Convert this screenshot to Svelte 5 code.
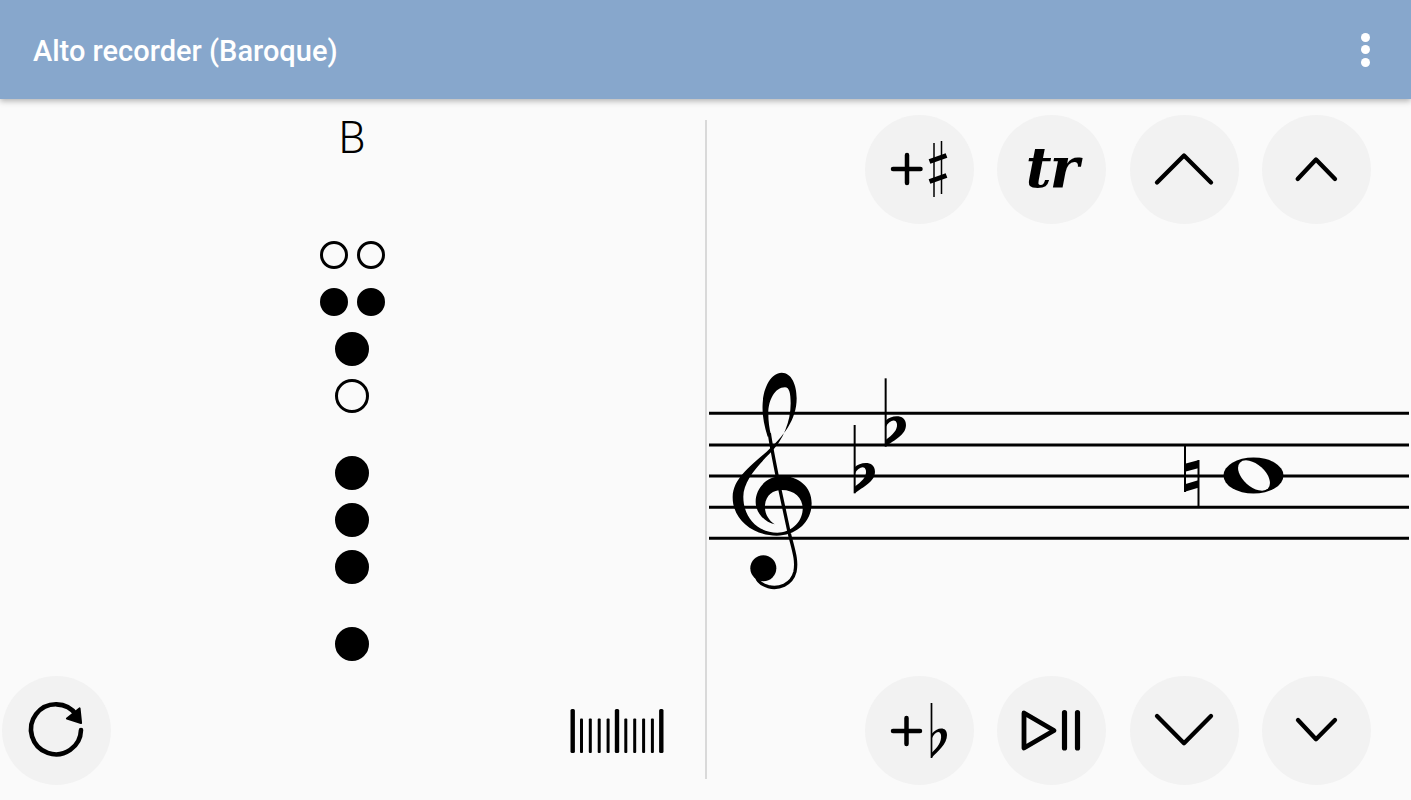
<script>
  // fingering chart for the current note, top to bottom
  const holes = [
    { cells: [false, false], small: true },
    { cells: [true, true], small: true },
    { cells: [true] },
    { cells: [false] },
    { cells: [true], gap: true },
    { cells: [true] },
    { cells: [true] },
    { cells: [true], gap: true }
  ];

  const staffLines = [413.3, 445, 476, 507.3, 538.3];
  const tallBars = [572.7, 617, 661.3];
  const shortBars = [581.5, 590.3, 599.2, 608.1, 625.8, 634.7, 643.6, 652.4];
</script>

<div class="screen">
  <header class="appbar">
    <span class="title">Alto recorder (Baroque)</span>
    <div class="menu"><i></i><i></i><i></i></div>
  </header>

  <main class="content">
    <section class="left">
      <div class="note">B</div>
      <div class="holes">
        {#each holes as row}
          <div class="hole-row" class:gap={row.gap}>
            {#each row.cells as closed}
              <span class="hole" class:small={row.small} class:closed></span>
            {/each}
          </div>
        {/each}
      </div>
      <div class="left-bottom">
        <div class="btn">
          <svg viewBox="0 0 109 109" class="icon">
            <path d="M74.500 39 A25 25 0 1 0 79 54" fill="none" stroke="#000" stroke-width="4.600" stroke-linecap="round" />
            <path d="M77.500 32.500 L79 47 L65 42.500 Z" fill="#000" stroke="#000" stroke-width="2.200" stroke-linejoin="round" />
          </svg>
        </div>
        <svg class="bars" viewBox="570 705 95 50">
          {#each tallBars as x}
            <rect x={x - 2.200} y="708" width="4.400" height="44" rx="1.500" />
          {/each}
          {#each shortBars as x}
            <rect x={x - 1.500} y="717.500" width="3" height="34.500" rx="1" />
          {/each}
        </svg>
      </div>
    </section>

    <div class="divider"></div>

    <section class="right">
      <div class="btn-row">
        <div class="btn">
          <svg viewBox="0 0 109 109" class="icon">
            <path d="M28 54 H55.500 M42 40 V68" stroke="#000" stroke-width="4.500" stroke-linecap="round" />
            <path d="M69 28 V82 M76.500 26 V79" stroke="#000" stroke-width="1.500" />
            <path d="M64.500 46.500 L81.500 40.500 M64.500 66.500 L81.500 60.500" stroke="#000" stroke-width="5" />
          </svg>
        </div>
        <div class="btn"><span class="trill">tr</span></div>
        <div class="btn">
          <svg viewBox="0 0 109 109" class="icon">
            <path d="M27 67.500 L54 40.500 L81 67.500" fill="none" stroke="#000" stroke-width="4.300" stroke-linecap="round" stroke-linejoin="round" />
          </svg>
        </div>
        <div class="btn">
          <svg viewBox="0 0 109 109" class="icon">
            <path d="M35.700 64 L54 44.500 L73 64" fill="none" stroke="#000" stroke-width="4.300" stroke-linecap="round" stroke-linejoin="round" />
          </svg>
        </div>
      </div>

      <svg class="staff" viewBox="707 350 704 250">
        {#each staffLines as y}
          <line x1="709" x2="1409" y1={y} y2={y} stroke="#000" stroke-width="3" />
        {/each}

        <!-- clef and flats, traced at 3x from the staff origin -->
        <g transform="translate(700 350) scale(0.3333)">
          <path d="M245 68 C275 68 290 105 290 145 C290 210 250 260 200 305 C150 350 100 385 98 440 C97 510 160 557 230 557 C290 557 335 515 335 460 C335 410 295 378 245 378 C200 378 167 415 167 455 C167 490 195 517 224 523 C205 510 193 490 195 465 C198 435 220 420 245 420 C285 420 310 445 308 480 C305 520 270 548 232 548 C175 548 130 505 130 440 C130 395 170 350 210 310 C250 270 272 215 272 160 C272 130 268 112 255 112 C225 112 205 150 205 190 C205 215 208 235 213 255 L203 260 C192 225 186 195 188 160 C190 110 215 68 245 68 Z" />
          <path d="M208 250 C215 300 230 370 240 420 L268 550 C280 600 292 630 285 665 C275 705 235 718 205 710 C185 704 172 695 170 680" fill="none" stroke="#000" stroke-width="10" />
          <circle cx="190" cy="655" r="39" />

          <path d="M464 225 V430" stroke="#000" stroke-width="6" />
          <path d="M464 352 C480 335 525 330 525 365 C525 395 490 410 464 430 L464 410 C485 395 500 380 498 362 C495 345 475 350 464 372 Z" />
          <g transform="translate(93 -140)">
            <path d="M464 225 V430" stroke="#000" stroke-width="6" />
            <path d="M464 352 C480 335 525 330 525 365 C525 395 490 410 464 430 L464 410 C485 395 500 380 498 362 C495 345 475 350 464 372 Z" />
          </g>
        </g>

        <!-- natural sign -->
        <path d="M1185 445 V492 M1198.500 460 V507" stroke="#000" stroke-width="2" />
        <path d="M1184 464 L1199 460 V468 L1184 472 Z M1184 484.500 L1199 480 V487.500 L1184 492 Z" />

        <!-- whole note -->
        <ellipse cx="1253.500" cy="475.500" rx="30" ry="18" />
        <ellipse cx="1254" cy="475.500" rx="19" ry="11" transform="rotate(42 1254 475.500)" fill="#fafafa" />
      </svg>

      <div class="btn-row bottom">
        <div class="btn">
          <svg viewBox="0 0 109 109" class="icon">
            <path d="M28 55 H55 M41.500 42 V68" stroke="#000" stroke-width="4.500" stroke-linecap="round" />
            <path d="M66.500 27 V82" stroke="#000" stroke-width="1.700" />
            <path d="M66.500 58 C72 51 82 50 82 59 C82 68 73 75 66.500 82 L66.500 77 C72 72 77 66 76 59 C75 54 70 55 66.500 63 Z" />
          </svg>
        </div>
        <div class="btn">
          <svg viewBox="0 0 109 109" class="icon">
            <path d="M27 37 L57 54.500 L27 72 Z" fill="none" stroke="#000" stroke-width="4.800" stroke-linejoin="round" />
            <path d="M67.500 36.500 V72 M80.500 36.500 V72" stroke="#000" stroke-width="5.200" stroke-linecap="round" />
          </svg>
        </div>
        <div class="btn">
          <svg viewBox="0 0 109 109" class="icon">
            <path d="M27 40 L54 67.300 L81 40" fill="none" stroke="#000" stroke-width="4.300" stroke-linecap="round" stroke-linejoin="round" />
          </svg>
        </div>
        <div class="btn">
          <svg viewBox="0 0 109 109" class="icon">
            <path d="M36 44 L54 63.300 L73 44" fill="none" stroke="#000" stroke-width="4.300" stroke-linecap="round" stroke-linejoin="round" />
          </svg>
        </div>
      </div>
    </section>
  </main>
</div>

<style>
  :global(body) {
    margin: 0;
    background: #fafafa;
  }

  .screen {
    width: 1411px;
    height: 800px;
    overflow: hidden;
    background: #fafafa;
    font-family: Roboto, "Liberation Sans", sans-serif;
  }

  .appbar {
    position: relative;
    z-index: 1;
    height: 99px;
    box-sizing: border-box;
    padding: 0 33px;
    display: flex;
    align-items: center;
    justify-content: space-between;
    background: #87a7cc;
    box-shadow: 0 2px 6px rgba(0, 0, 0, 0.3);
  }

  .title {
    color: #fff;
    font-size: 29px;
    font-weight: 500;
    margin-top: 2px;
  }

  .menu {
    display: flex;
    flex-direction: column;
    gap: 3.500px;
    margin-right: 8px;
  }

  .menu i {
    display: block;
    width: 9px;
    height: 9px;
    border-radius: 50%;
    background: #fff;
  }

  .content {
    display: flex;
    height: 701px;
  }

  .left {
    width: 705px;
    flex: none;
    display: flex;
    flex-direction: column;
    align-items: center;
    box-sizing: border-box;
    padding: 15px 1px 15px 0;
  }

  .note {
    font-size: 44px;
    font-weight: 300;
    line-height: 48px;
  }

  .holes {
    margin-top: 69px;
  }

  .hole-row {
    height: 47px;
    display: flex;
    align-items: center;
    justify-content: center;
    gap: 9px;
  }

  .hole-row.gap {
    margin-top: 30px;
  }

  .hole {
    width: 34px;
    height: 34px;
    box-sizing: border-box;
    border: 3px solid #000;
    border-radius: 50%;
  }

  .hole.small {
    width: 28px;
    height: 28px;
  }

  .hole.closed {
    background: #000;
  }

  .left-bottom {
    margin-top: auto;
    width: 100%;
    box-sizing: border-box;
    padding: 0 39px 0 2px;
    display: flex;
    align-items: center;
    justify-content: space-between;
  }

  .bars {
    width: 95px;
    height: 50px;
  }

  .divider {
    width: 2px;
    flex: none;
    margin: 21px 0;
    background: #d9d9d9;
  }

  .right {
    flex: 1;
    display: flex;
    flex-direction: column;
    box-sizing: border-box;
    padding: 16px 0 15px;
  }

  .btn-row {
    display: flex;
    justify-content: flex-end;
    gap: 23.500px;
    padding-right: 40px;
  }

  .btn-row.bottom {
    margin-top: auto;
  }

  .btn {
    width: 109px;
    height: 109px;
    flex: none;
    border-radius: 50%;
    background: #f2f2f2;
    display: flex;
    align-items: center;
    justify-content: center;
  }

  .icon {
    width: 109px;
    height: 109px;
    display: block;
  }

  .trill {
    font-family: "DejaVu Serif", "Liberation Serif", serif;
    font-style: italic;
    font-weight: 700;
    font-size: 56px;
    letter-spacing: -2px;
    line-height: 1;
    margin-top: -6px;
  }

  .staff {
    display: block;
    width: 704px;
    height: 250px;
    margin-top: 126px;
  }
</style>
